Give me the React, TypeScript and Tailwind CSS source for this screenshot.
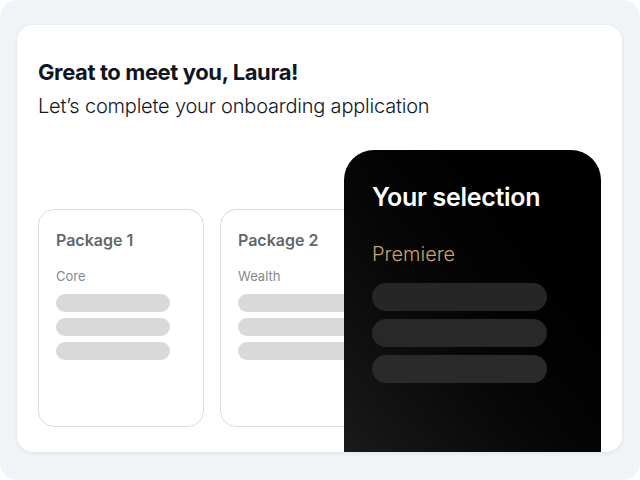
export default function App() {
  return (
    <div className="h-[480px] w-[640px] bg-white" style={{ fontFamily: "Inter, 'Noto Sans', sans-serif" }}>
      <div className="h-full w-full rounded-[18px] bg-[#f0f4f7] pt-[25px] pl-[17px]">
        <div className="relative h-[427px] w-[605px] overflow-hidden rounded-[16px] bg-white shadow-[0_1px_4px_rgba(15,23,42,0.08)] pl-[21px] pt-[33px]">
          <div className="text-[22px] font-bold leading-[28px] tracking-[-0.4px] text-[#0f1623]">
            Great to meet you, Laura!
          </div>
          <div className="mt-[7px] text-[20px] font-light leading-[26px] tracking-[-0.2px] text-[#111827]">
            Let’s complete your onboarding application
          </div>

          <div className="mt-[31px] flex items-start">
            <div className="mt-[59px] flex gap-[16px]">
              <PackageCard title="Package 1" sub="Core" />
              <PackageCard title="Package 2" sub="Wealth" />
            </div>
            <div className="relative z-10 -ml-[42px] h-[330px] w-[257px] rounded-t-[30px] bg-gradient-to-bl from-[#000000] via-[#050505] to-[#1c1c1c] px-[28px] pt-[31px]">
              <div className="text-[25px] font-semibold leading-[32px] tracking-[-0.3px] text-white">
                Your selection
              </div>
              <div className="mt-[28px] text-[20px] font-light leading-[26px] text-[#c9a36b]">
                Premiere
              </div>
              <div className="mt-[16px] flex w-[175px] flex-col gap-[8px]">
                <div className="h-[28px] rounded-full bg-[#262626]" />
                <div className="h-[28px] rounded-full bg-[#282828]" />
                <div className="h-[28px] rounded-full bg-[#2a2a2a]" />
              </div>
            </div>
          </div>
        </div>
      </div>
    </div>
  );
}

function PackageCard({ title, sub }: { title: string; sub: string }) {
  return (
    <div className="h-[218px] w-[166px] rounded-[16px] border border-[#dcdcdc] bg-white px-[17px] pt-[19px]">
      <div className="text-[16px] font-semibold leading-[22px] text-[#63676d]">{title}</div>
      <div className="mt-[16px] text-[13px] leading-[18px] text-[#85898f]">{sub}</div>
      <div className="mt-[9px] flex w-[114px] flex-col gap-[6px]">
        <div className="h-[18px] rounded-full bg-[#d9d9d9]" />
        <div className="h-[18px] rounded-full bg-[#d9d9d9]" />
        <div className="h-[18px] rounded-full bg-[#d9d9d9]" />
      </div>
    </div>
  );
}
